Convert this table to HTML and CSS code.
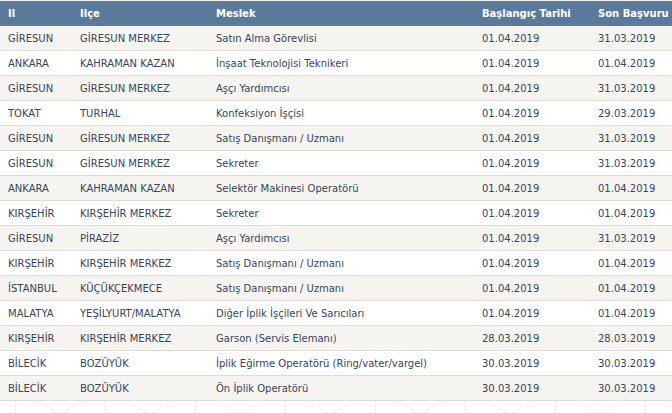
FILE: index.html
```html
<!DOCTYPE html>
<html lang="tr">
<head>
<meta charset="utf-8">
<link rel="stylesheet" href="styles.css">
</head>
<body>
<div class="page">
<table class="jobs">
<colgroup>
<col class="c-il"><col class="c-ilce"><col class="c-meslek"><col class="c-bas"><col class="c-son">
</colgroup>
<thead>
<tr><th>Il</th><th>Ilçe</th><th>Meslek</th><th>Başlangıç Tarihi</th><th>Son Başvuru</th></tr>
</thead>
<tbody>
<tr><td>GİRESUN</td><td>GİRESUN MERKEZ</td><td>Satın Alma Görevlisi</td><td>01.04.2019</td><td>31.03.2019</td></tr>
<tr><td>ANKARA</td><td>KAHRAMAN KAZAN</td><td>İnşaat Teknolojisi Teknikeri</td><td>01.04.2019</td><td>01.04.2019</td></tr>
<tr><td>GİRESUN</td><td>GİRESUN MERKEZ</td><td>Aşçı Yardımcısı</td><td>01.04.2019</td><td>31.03.2019</td></tr>
<tr><td>TOKAT</td><td>TURHAL</td><td>Konfeksiyon İşçisi</td><td>01.04.2019</td><td>29.03.2019</td></tr>
<tr><td>GİRESUN</td><td>GİRESUN MERKEZ</td><td>Satış Danışmanı / Uzmanı</td><td>01.04.2019</td><td>31.03.2019</td></tr>
<tr><td>GİRESUN</td><td>GİRESUN MERKEZ</td><td>Sekreter</td><td>01.04.2019</td><td>31.03.2019</td></tr>
<tr><td>ANKARA</td><td>KAHRAMAN KAZAN</td><td>Selektör Makinesi Operatörü</td><td>01.04.2019</td><td>01.04.2019</td></tr>
<tr><td>KIRŞEHİR</td><td>KIRŞEHİR MERKEZ</td><td>Sekreter</td><td>01.04.2019</td><td>01.04.2019</td></tr>
<tr><td>GİRESUN</td><td>PİRAZİZ</td><td>Aşçı Yardımcısı</td><td>01.04.2019</td><td>31.03.2019</td></tr>
<tr><td>KIRŞEHİR</td><td>KIRŞEHİR MERKEZ</td><td>Satış Danışmanı / Uzmanı</td><td>01.04.2019</td><td>01.04.2019</td></tr>
<tr><td>İSTANBUL</td><td>KÜÇÜKÇEKMECE</td><td>Satış Danışmanı / Uzmanı</td><td>01.04.2019</td><td>01.04.2019</td></tr>
<tr><td>MALATYA</td><td>YEŞİLYURT/MALATYA</td><td>Diğer İplik İşçileri Ve Sarıcıları</td><td>01.04.2019</td><td>01.04.2019</td></tr>
<tr><td>KIRŞEHİR</td><td>KIRŞEHİR MERKEZ</td><td>Garson (Servis Elemanı)</td><td>28.03.2019</td><td>28.03.2019</td></tr>
<tr><td>BİLECİK</td><td>BOZÜYÜK</td><td>İplik Eğirme Operatörü (Ring/vater/vargel)</td><td>30.03.2019</td><td>30.03.2019</td></tr>
<tr><td>BİLECİK</td><td>BOZÜYÜK</td><td>Ön İplik Operatörü</td><td>30.03.2019</td><td>30.03.2019</td></tr>
</tbody>
</table>
</div>
</body>
</html>
```
FILE: styles.css
```css
html, body {
  margin: 0;
  padding: 0;
}
body {
  background-color: #ffffff;
  background-image: url("data:image/svg+xml;utf8,<svg xmlns='http://www.w3.org/2000/svg' width='180' height='120'><g fill='none' stroke='%23f1efeb' stroke-width='1'><path d='M15.5 0V120M105.5 0V120'/><path d='M35 0L60 14L85 0M35 30L60 14L85 30'/><path d='M125 30L150 14L175 0M125 0L150 14L175 30'/></g></svg>");
  background-position: 0 400px;
  font-family: "DejaVu Sans", Verdana, sans-serif;
}
.page {
  padding-top: 1px;
  background: #f7f6f3;
}
.jobs {
  width: 672px;
  border-collapse: collapse;
  table-layout: fixed;
  font-size: 10px;
  color: #37445a;
}
.c-il { width: 72px; }
.c-ilce { width: 136px; }
.c-meslek { width: 266px; }
.c-bas { width: 116px; }
.c-son { width: 82px; }
.jobs th {
  background: #5b7a9b;
  color: #ffffff;
  font-weight: bold;
  text-align: left;
  height: 25px;
  padding: 0 0 0 8px;
  white-space: nowrap;
  overflow: hidden;
}
.jobs td {
  height: 24px;
  padding: 0 0 0 8px;
  border-bottom: 1px solid #dedcd8;
  white-space: nowrap;
  overflow: hidden;
  background: #ffffff;
}
.jobs tbody tr:nth-child(odd) td {
  background: #f5f4f1;
}
```
